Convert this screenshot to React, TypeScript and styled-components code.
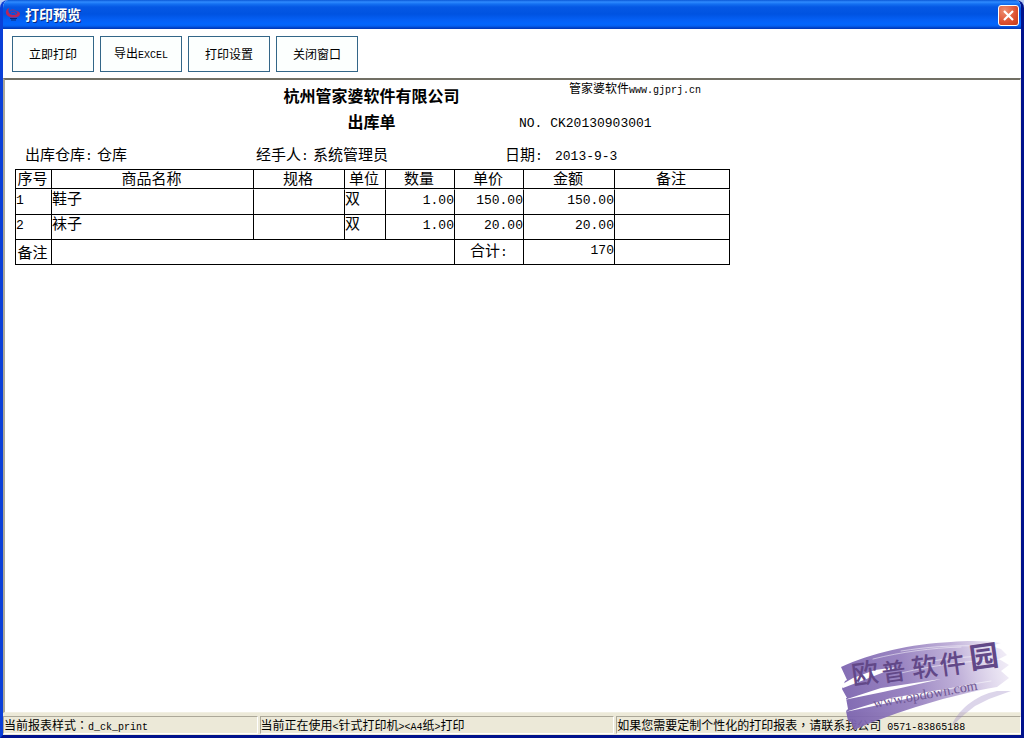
import React from "react";
import styled, { createGlobalStyle, css } from "styled-components";

const GlobalStyle = createGlobalStyle`
  * { box-sizing: border-box; }
  html, body, #root { height: 100%; margin: 0; }
  body {
    background: #b9cdf3;
    color: #000;
    font: 12px/16px "Noto Sans CJK SC", sans-serif;
  }
`;

const Window = styled.div`
  position: relative;
  display: flex;
  flex-direction: column;
  height: 100%;
  min-height: 400px;
  border: solid #0a3fd8;
  border-width: 0 3px 3px;
  border-right-color: #00128c;
  border-bottom-color: #00128c;
  border-radius: 8px 8px 0 0;
  background: #fff;
  overflow: hidden;
`;

const TitleBar = styled.header`
  display: flex;
  align-items: center;
  gap: 4px;
  height: 29px;
  flex: none;
  margin: 0 -3px;
  padding: 2px 5px 0 5px;
  background: linear-gradient(
    #0a58d6 0, #2f8bff 2px, #1470f2 4px, #0558e4 7px, #0053e1 14px,
    #0560f5 20px, #0366fd 24px, #0560f0 26px, #003fc4 28px, #0038b4 29px
  );
`;

const Title = styled.h1`
  flex: 1;
  margin: 0;
  padding-bottom: 3px;
  color: #fff;
  font-size: 14px;
  line-height: 20px;
  font-weight: 700;
  text-shadow: 1px 1px 0 #0a2a80;
`;

const CloseButton = styled.button`
  display: grid;
  place-items: center;
  width: 21px;
  height: 21px;
  padding: 0;
  border: 1px solid #fff;
  border-radius: 3px;
  background: radial-gradient(circle at 30% 25%, #ee8e70, #dd5030 60%, #c03a18);
`;

const Toolbar = styled.nav`
  display: flex;
  flex-wrap: wrap;
  gap: 6px;
  flex: none;
  padding: 7px 9px 6px;
`;

const ToolButton = styled.button`
  width: 82px;
  height: 36px;
  padding: 0;
  border: 1px solid #336688;
  background: #fcfffe;
  color: #000;
  font: inherit;
`;

const Latin = styled.span<{ $large?: boolean }>`
  font-family: "Liberation Mono", monospace;
  font-size: ${(p) => (p.$large ? 13 : 10)}px;
`;

const CenteredMark = styled.span`
  font-family: "Noto Sans CJK TC", sans-serif;
`;

const Sheet = styled.main`
  flex: 1;
  min-height: 0;
  overflow: auto;
  border: solid;
  border-width: 2px 1px 1px 2px;
  border-color: #716f64 #f1efe2 #f1efe2 #aca899;
  background: #fff;
  padding: 0 10px;
`;

const Report = styled.article`
  max-width: 715px;
  font-size: 15px;
  line-height: 18px;
`;

const Masthead = styled.div`
  display: grid;
  grid-template-columns: 241px 249px 1fr;
  grid-template-rows: 26px 34px 29px;
`;

const Heading = styled.h2<{ $row: number }>`
  grid-column: 1 / -1;
  grid-row: ${(p) => p.$row};
  margin: 0;
  padding-top: 3px;
  padding-right: 2px;
  font-size: 16px;
  line-height: 24px;
  text-align: center;
`;

const Side = styled.div<{ $row: number; $kind: "site" | "number" }>`
  grid-column: 3;
  grid-row: ${(p) => p.$row};
  ${(p) =>
    p.$kind === "site"
      ? css`padding-left: 64px; font-size: 12px; line-height: 16px;`
      : css`padding-left: 14px; padding-top: 6px;`}
`;

const Field = styled.dl<{ $inset?: boolean }>`
  display: flex;
  grid-row: 3;
  margin: 0;
  padding-top: 5px;
  padding-left: ${(p) => (p.$inset ? 10 : 0)}px;
`;

const FieldLabel = styled.dt<{ $width: number }>`
  width: ${(p) => p.$width}px;
  white-space: nowrap;
`;

const FieldValue = styled.dd`
  margin: 0;
`;

const Table = styled.table`
  width: 100%;
  table-layout: fixed;
  border-collapse: separate;
  border-spacing: 0;
  border: solid #000;
  border-width: 1px 0 0 1px;
  line-height: 15px;
`;

const cell = css`
  padding: 0;
  border: solid #000;
  border-width: 0 1px 1px 0;
  font-weight: 400;
  vertical-align: top;
`;

const HeadCell = styled.th`
  ${cell}
  height: 19px;
  padding-right: 2px;
  text-align: center;
`;

const Cell = styled.td<{ $align?: "left" | "right" | "center" }>`
  ${cell}
  height: 25px;
  text-align: ${(p) => p.$align ?? "left"};
`;

const BodyRow = styled.tr`
  &:first-child > td {
    height: 26px;
    border-top: 1px solid #fff;
  }
`;

const FootLabel = styled.th`
  ${cell}
  height: 25px;
  padding-top: 4px;
  padding-right: 2px;
  text-align: center;
`;

const FootTotal = styled.th`
  ${cell}
  padding-top: 2px;
`;

const StatusBar = styled.footer`
  display: grid;
  grid-template-columns: 254fr 354fr 404fr;
  gap: 2px;
  flex: none;
  padding: 3px 0 1px;
  background: #ece9d8;
`;

const StatusPanel = styled.div`
  height: 18px;
  border: 1px solid;
  border-color: #aca899 #fff #fff #aca899;
  line-height: 16px;
  white-space: nowrap;
  overflow: hidden;
`;

const Watermark = styled.svg`
  position: absolute;
  right: 0;
  bottom: 0;
  width: 190px;
  height: 106px;
  pointer-events: none;
`;

const columns = [
  { name: "序号", width: 36 },
  { name: "商品名称", width: 202 },
  { name: "规格", width: 91 },
  { name: "单位", width: 41 },
  { name: "数量", width: 69 },
  { name: "单价", width: 69 },
  { name: "金额", width: 91 },
  { name: "备注", width: 115 },
];

const rows = [
  { no: "1", name: "鞋子", unit: "双", qty: "1.00", price: "150.00", sum: "150.00" },
  { no: "2", name: "袜子", unit: "双", qty: "1.00", price: "20.00", sum: "20.00" },
];

const AppIcon = () => (
  <svg width="16" height="16" viewBox="0 0 16 16" aria-hidden="true">
    <path d="M4 0C0 2 0 6 3 8c3 2 8 2 11 0 2-2 1-4-2-5 1 3-1 4-4 4C5 7 2 4 4 0Z" fill="#b8265c" />
    <path d="M5 3c2-2 5-1 7 1M6 5c2-1 4-1 5 1" fill="none" stroke="#8a3478" strokeWidth="1" />
    <path d="M5 10.500h7M6 12h5" stroke="#0a2a78" strokeWidth="1.200" />
  </svg>
);

const BrushLogo = () => (
  <Watermark viewBox="0 0 190 106" role="img" aria-label="欧普软件园 www.opdown.com">
    <defs>
      <linearGradient id="brush" x1="10" x2="180" y1="80" y2="40" gradientUnits="userSpaceOnUse">
        <stop offset="0" stopColor="#7a62ae" stopOpacity="0.95" />
        <stop offset="0.4" stopColor="#8f78bb" stopOpacity="0.9" />
        <stop offset="0.7" stopColor="#b09dcf" stopOpacity="0.8" />
        <stop offset="1" stopColor="#e4dcf0" stopOpacity="0.5" />
      </linearGradient>
    </defs>
    <path
      fill="url(#brush)"
      d="M10 38C40 24 80 15 120 13 140 11 158 12 170 14L160 17 170 20 176 26 168 30 178 36 170 42 178 49 166 58C120 66 66 82 23 101L20 93 17 92 15 82 17 80 15 69 16 69 11 60 14 52 16 51Z"
    />
    <path fill="#9c86c2" opacity="0.35" d="M120 98c6-16 24-32 46-36l14 0-22 8-14 7-10 8Z" />
    <g fill="#fff">
      <path d="M10 56 22 49 44 41 66 38 38 49 12 59Z" />
      <path d="M13 71 50 59 110 50 52 63Z" />
      <path d="M14 83 60 69 126 58 62 73Z" />
    </g>
    <g fill="none" stroke="#fff" strokeLinecap="round" opacity="0.5">
      <path d="M42 30c28-7 58-11 88-12M70 22c26-4 50-6 80-5M70 44c34-8 66-12 104-14M86 68c26-6 46-12 74-16M90 34c26-5 50-7 76-7" />
    </g>
    <g fill="#624888" fontFamily="'Noto Sans CJK SC', sans-serif" fontWeight="500">
      <text x="22" y="56" fontSize="27" transform="rotate(-8 22 56)">欧</text>
      <text x="52" y="53" fontSize="24" transform="rotate(-8 52 53)">普</text>
      <text x="82" y="49" fontSize="26" transform="rotate(-8 82 49)">软</text>
      <text x="110" y="46" fontSize="26" transform="rotate(-8 110 46)">件</text>
      <text x="140" y="40" fontSize="29" fontWeight="700" transform="rotate(-8 140 40)">园</text>
    </g>
    <text x="43" y="79" fill="#6f5794" fontFamily="'Liberation Serif', serif" fontSize="14" transform="rotate(-10 43 79)">www.opdown.com</text>
  </Watermark>
);

export default function App() {
  return (
    <>
      <GlobalStyle />
      <Window>
        <TitleBar>
          <AppIcon />
          <Title>打印预览</Title>
          <CloseButton aria-label="关闭">
            <svg width="13" height="13" viewBox="0 0 13 13" aria-hidden="true">
              <path d="M2 2l9 9M11 2l-9 9" stroke="#fff" strokeWidth="2.200" />
            </svg>
          </CloseButton>
        </TitleBar>
        <Toolbar>
          <ToolButton>立即打印</ToolButton>
          <ToolButton>导出<Latin>EXCEL</Latin></ToolButton>
          <ToolButton>打印设置</ToolButton>
          <ToolButton>关闭窗口</ToolButton>
        </Toolbar>
        <Sheet>
          <Report>
            <Masthead>
              <Heading $row={1}>杭州管家婆软件有限公司</Heading>
              <Side $row={1} $kind="site">管家婆软件<Latin>www.gjprj.cn</Latin></Side>
              <Heading $row={2}>出库单</Heading>
              <Side $row={2} $kind="number"><Latin $large>NO. CK20130903001</Latin></Side>
              <Field $inset>
                <FieldLabel $width={72}>出库仓库<Latin $large>:</Latin></FieldLabel>
                <FieldValue>仓库</FieldValue>
              </Field>
              <Field>
                <FieldLabel $width={57}>经手人<Latin $large>:</Latin></FieldLabel>
                <FieldValue>系统管理员</FieldValue>
              </Field>
              <Field>
                <FieldLabel $width={50}>日期<Latin $large>:</Latin></FieldLabel>
                <FieldValue><Latin $large>2013-9-3</Latin></FieldValue>
              </Field>
            </Masthead>
            <Table>
              <colgroup>
                {columns.map((c) => (
                  <col key={c.name + c.width} style={{ width: `${(c.width / 714) * 100}%` }} />
                ))}
              </colgroup>
              <thead>
                <tr>
                  {columns.map((c) => (
                    <HeadCell key={c.name} scope="col">{c.name}</HeadCell>
                  ))}
                </tr>
              </thead>
              <tbody>
                {rows.map((r) => (
                  <BodyRow key={r.no}>
                    <Cell><Latin $large>{r.no}</Latin></Cell>
                    <Cell>{r.name}</Cell>
                    <Cell />
                    <Cell>{r.unit}</Cell>
                    <Cell $align="right"><Latin $large>{r.qty}</Latin></Cell>
                    <Cell $align="right"><Latin $large>{r.price}</Latin></Cell>
                    <Cell $align="right"><Latin $large>{r.sum}</Latin></Cell>
                    <Cell />
                  </BodyRow>
                ))}
              </tbody>
              <tfoot>
                <tr>
                  <FootLabel scope="row">备注</FootLabel>
                  <Cell colSpan={4} />
                  <FootTotal scope="row">合计<Latin $large>:</Latin></FootTotal>
                  <Cell $align="right"><Latin $large>170</Latin></Cell>
                  <Cell />
                </tr>
              </tfoot>
            </Table>
          </Report>
        </Sheet>
        <StatusBar>
          <StatusPanel>当前报表样式<CenteredMark>：</CenteredMark><Latin>d_ck_print</Latin></StatusPanel>
          <StatusPanel>当前正在使用<Latin>&lt;</Latin>针式打印机<Latin>&gt;&lt;A4</Latin>纸<Latin>&gt;</Latin>打印</StatusPanel>
          <StatusPanel>如果您需要定制个性化的打印报表<CenteredMark>，</CenteredMark>请联系我公司<Latin> 0571-83865188</Latin></StatusPanel>
        </StatusBar>
        <BrushLogo />
      </Window>
    </>
  );
}
